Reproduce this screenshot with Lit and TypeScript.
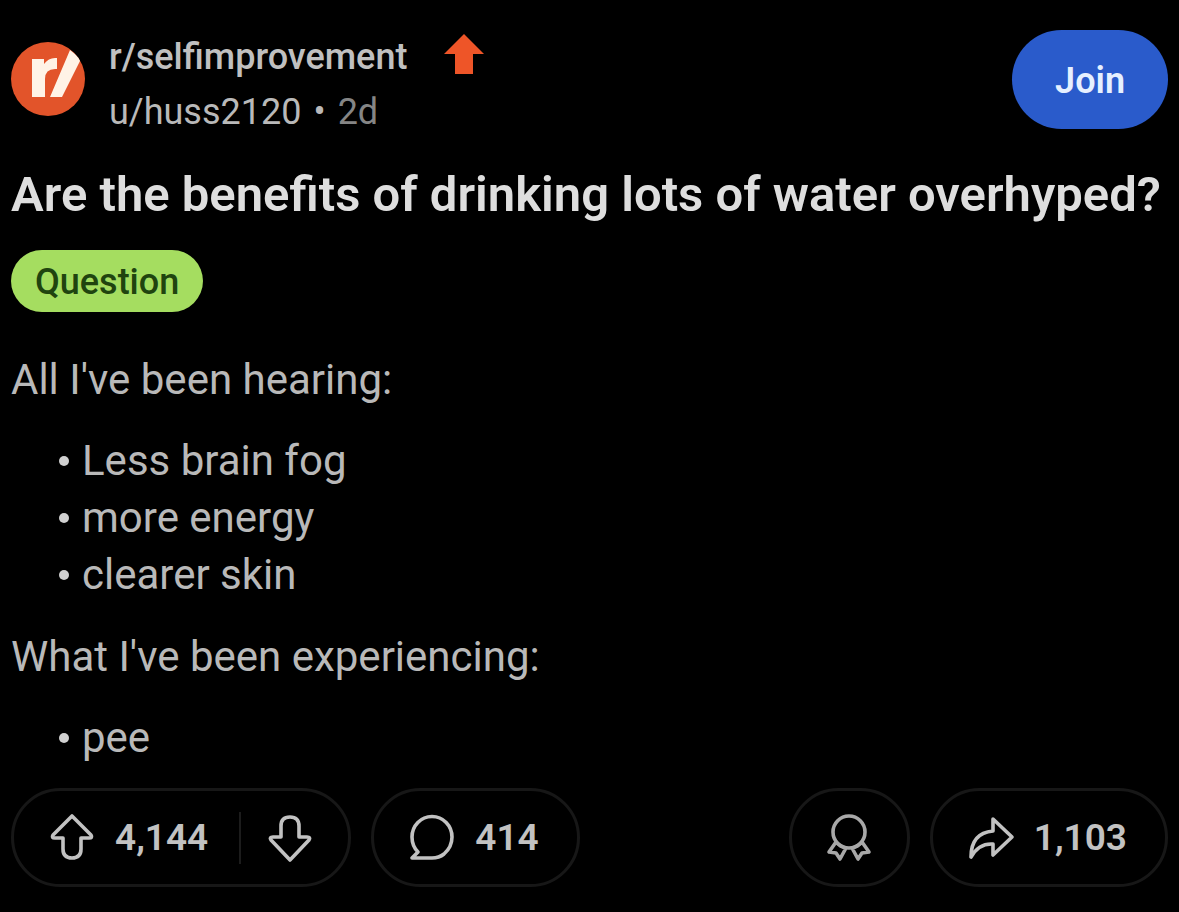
import { LitElement, html, css, svg } from "lit";
import { customElement, property } from "lit/decorators.js";

const icons = {
  up: svg`<path d="M22 2 L41 21 Q43 24 39 24 H31 V35 Q31 44 22 44 Q13 44 13 35 V24 H5 Q1 24 3 21 Z"/>`,
  down: svg`<path d="M22 46 L41 26 Q43 23 39 23 H31 V12 Q31 3 22 3 Q13 3 13 12 V23 H5 Q1 23 3 26 Z"/>`,
  comment: svg`<path d="M2 44 L8 38 Q2 32 2 23 A20 20.500 0 0 1 42 23 Q42 33 34 40 Q29 44 22 44 Z"/>`,
  award: svg`<circle cx="22" cy="18" r="16"/><path d="M9 28 L2 38 L9 39 L13 45 L19 34 M35 28 L42 38 L35 39 L31 45 L25 34 M9 28 Q13 33 19 34 M35 28 Q31 33 25 34"/>`,
  share: svg`<path d="M24 5 L43 23 L24 41 V30 Q10 29 2 43 Q2 19 24 17 Z"/>`,
};

@customElement("post-icon")
class PostIcon extends LitElement {
  @property() name: keyof typeof icons = "up";
  static styles = css`
    :host { display: block; width: 44px; height: 48px; flex: none; }
    svg { display: block; overflow: visible; fill: none; stroke: currentColor; stroke-width: 3.6; stroke-linejoin: round; stroke-linecap: round; }
  `;
  render() {
    return html`<svg width="44" height="48" viewBox="0 0 44 48" aria-hidden="true">${icons[this.name]}</svg>`;
  }
}

@customElement("app-root")
class AppRoot extends LitElement {
  static styles = css`
    :host {
      display: block; min-height: 100vh; box-sizing: border-box; padding: 30px 11px 24px;
      background: #000; color: #b9b9b9; font-family: Roboto, sans-serif; font-size: 42px; line-height: 57px;
    }
    button { font: inherit; color: inherit; background: none; border: 0; padding: 0; margin: 0; cursor: pointer; }
    a { color: inherit; text-decoration: none; }
    .head { display: flex; align-items: flex-start; gap: 24px; }
    .avatar { width: 74px; height: 74px; flex: none; margin-top: 12px; border-radius: 50%; overflow: hidden; background: #e2542a; }
    .avatar svg { display: block; }
    .who { flex: 1; font-size: 36px; line-height: 55px; }
    .sub { display: flex; align-items: flex-start; gap: 36px; font-weight: 500; color: #c0c0c0; }
    .sub svg { display: block; margin-top: 3px; }
    .by { display: flex; gap: 12px; }
    .time { color: #858585; }
    .join { height: 99px; padding: 4px 43px 0; border-radius: 50px; background: #2a5bcb; color: #e6f0ff; font-size: 36px; font-weight: 600; }
    h1 { margin: 26px 0 0; font-size: 49px; line-height: 58px; font-weight: 600; color: #dedede; }
    .flair { display: inline-block; margin: 26px 0 39px; padding: 0 24px; height: 62px; line-height: 64px; border-radius: 31px; background: #a5dd60; color: #20440f; font-size: 36px; font-weight: 500; vertical-align: top; }
    p { margin: 0; }
    ul { list-style: none; margin: 24px 0 25px; padding: 0 0 0 48px; }
    li { display: flex; align-items: center; gap: 13px; }
    li::before { content: ""; width: 10px; height: 10px; border-radius: 50%; background: #d0d0d0; }
    .last { margin-bottom: 22px; }
    .bar { display: flex; gap: 20px; font-size: 37px; font-weight: 600; color: #c2c2c2; }
    .pill { box-sizing: border-box; height: 99px; display: flex; align-items: center; border: 3px solid #171717; border-radius: 50px; }
    .action { display: flex; align-items: center; gap: 21px; height: 100%; padding: 0 38px 0 36px; }
    .vote { padding-right: 31px; }
    .downvote { padding: 0 36px 0 27px; }
    .rule { width: 2px; height: 52px; background: #1c1c1c; }
    .award { margin-left: auto; color: #a8a8a8; }
    .award .action { padding: 0 36px 0 35px; }
  `;
  render() {
    return html`
      <header class="head">
        <div class="avatar">
          <svg width="74" height="74" viewBox="0 0 74 74" role="img" aria-label="Community">
            <path fill="#fff3e6" d="M21 17 H33 V22 Q38 15 46 16 V27 Q34 26 34 37 V55 H21 Z M39 55 L59 8 L70 17 L51 55 Z"/>
          </svg>
        </div>
        <div class="who">
          <div class="sub">
            <a href="#community">r/selfimprovement</a>
            <svg width="42" height="42" viewBox="0 0 42 42" aria-hidden="true"><path fill="#ee5528" d="M21 1 L41 21 H30 V41 H12 V21 H1 Z"/></svg>
          </div>
          <div class="by"><a href="#user">u/huss2120</a><span>•</span><span class="time">2d</span></div>
        </div>
        <button class="join">Join</button>
      </header>
      <h1>Are the benefits of drinking lots of water overhyped?</h1>
      <span class="flair">Question</span>
      <p>All I've been hearing:</p>
      <ul><li>Less brain fog</li><li>more energy</li><li>clearer skin</li></ul>
      <p>What I've been experiencing:</p>
      <ul class="last"><li>pee</li></ul>
      <footer class="bar">
        <div class="pill">
          <button class="action vote" aria-label="Upvote, 4,144"><post-icon name="up"></post-icon>4,144</button>
          <span class="rule"></span>
          <button class="action downvote" aria-label="Downvote"><post-icon name="down"></post-icon></button>
        </div>
        <div class="pill"><button class="action"><post-icon name="comment"></post-icon>414</button></div>
        <div class="pill award"><button class="action" aria-label="Award"><post-icon name="award"></post-icon></button></div>
        <div class="pill"><button class="action"><post-icon name="share"></post-icon>1,103</button></div>
      </footer>
    `;
  }
}
